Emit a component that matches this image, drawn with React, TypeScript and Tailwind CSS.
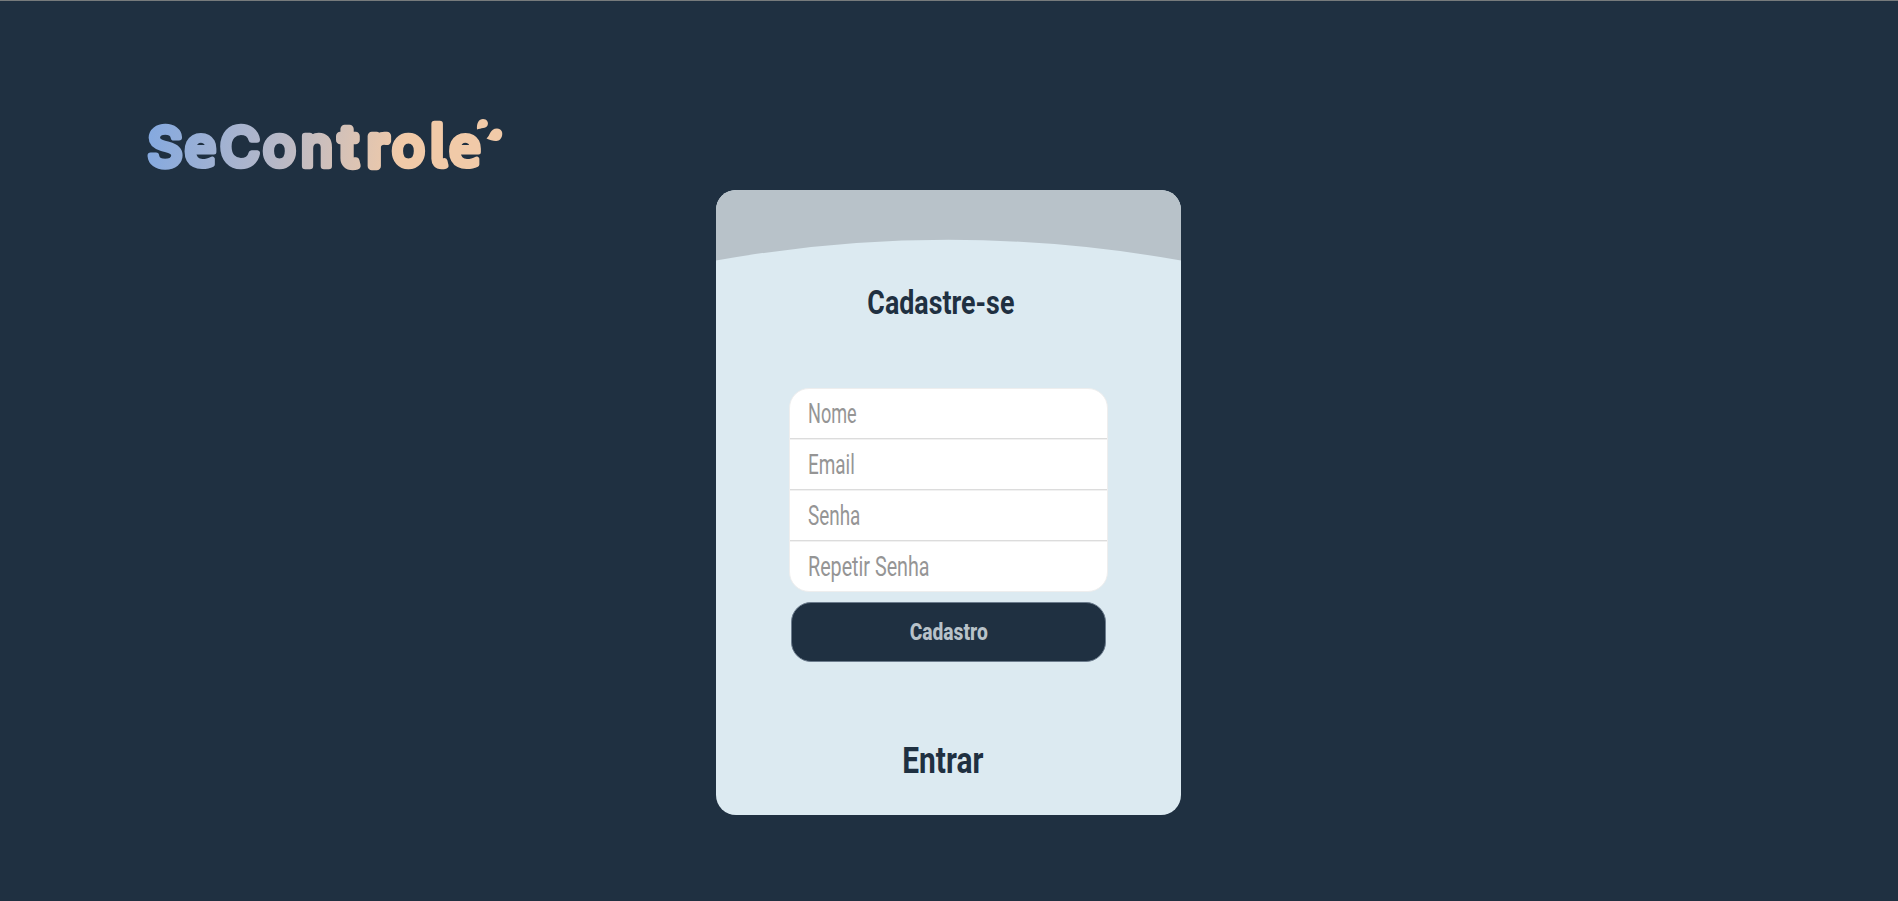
import React from "react";

const fields = [
  { label: "Nome", scale: "scale-x-[0.67]" },
  { label: "Email", scale: "scale-x-[0.70]" },
  { label: "Senha", scale: "scale-x-[0.70]" },
  { label: "Repetir Senha", scale: "scale-x-[0.73]" },
];

function Logo() {
  return (
    <svg width="380" height="80" viewBox="136 105 380 80" role="img" aria-label="SeControle">
      <defs>
        <linearGradient id="brand" gradientUnits="userSpaceOnUse" x1="148" y1="125" x2="400" y2="165">
          <stop offset="0" stopColor="#84a9e0" />
          <stop offset="0.5" stopColor="#b5b8c8" />
          <stop offset="1" stopColor="#f1caa8" />
        </linearGradient>
      </defs>
      <text
        y="166"
        x="165 200.500 240 279.500 317 348.500 378 408.500 438 465"
        textAnchor="middle"
        fontFamily="Inter, sans-serif"
        fontSize="54"
        fontWeight="400"
        fill="url(#brand)"
        stroke="url(#brand)"
        strokeWidth="6.500"
        strokeLinejoin="round"
        className="[font-feature-settings:'cv05']"
      >
        S
        <tspan fontFamily="'Open Sans', sans-serif" fontSize="56" fontWeight="600" strokeWidth="5">e</tspan>
        Con
        <tspan strokeWidth="8.500">tr</tspan>
        o
        <tspan fontSize="57">l</tspan>
        <tspan fontFamily="'Open Sans', sans-serif" fontSize="56" fontWeight="600" strokeWidth="5">e</tspan>
      </text>
      <g fill="#f1caa8">
        <path d="M477 129.500C476.500 123 479 119 483 119C487 119 489 122.500 487.500 125.500C486 128.500 481 128 477 129.500Z" />
        <path d="M486.500 138.500C490 136 490 128.500 497 128.500C501.500 128.500 503 132.500 502 136C500 143 493 141.500 486.500 138.500Z" />
      </g>
    </svg>
  );
}

export default function App() {
  return (
    <main className="flex h-[901px] w-full flex-col border-t border-[#777b7c] bg-[#1f3041] font-['Roboto',sans-serif]">
      <header className="h-[189px] pt-[104px] pl-[136px]">
        <Logo />
      </header>
      <section className="ml-[716px] flex h-[625px] w-[465px] flex-col items-center overflow-hidden rounded-[20px] bg-[#dceaf1]">
        <svg className="block shrink-0" width="465" height="71" viewBox="0 0 465 71">
          <path d="M0 0H465V70.500A1329 1329 0 0 0 0 70.500Z" fill="#b8c2c9" />
        </svg>
        <h1 className="mt-[22px] -ml-[15px] h-10 scale-x-[0.8] text-[33.5px] leading-10 font-bold whitespace-nowrap text-[#1f3041]">
          Cadastre-se
        </h1>
        <form className="mt-[65px] flex w-[319px] flex-col items-center">
          <div className="h-[204px] w-full overflow-hidden rounded-[20px] border border-[#eeeeee] bg-white">
            {fields.map((field) => (
              <label
                key={field.label}
                className="flex h-[51px] items-center border-b border-[#dcdcdc] pt-[3px] pl-[18px] shadow-[0_1px_0_#f1f1f1] first:h-[50px] first:pt-px"
              >
                <span className={`${field.scale} origin-left text-[27px] leading-none whitespace-nowrap text-[#959595]`}>
                  {field.label}
                </span>
              </label>
            ))}
          </div>
          <button type="button" className="mt-[10px] flex h-[60px] w-[315px] items-center justify-center rounded-[20px] border border-[#6c7c8d] bg-[#1f3041]">
            <span className="scale-x-[0.785] text-[24.500px] leading-none font-extrabold text-[#b8c2c9]">Cadastro</span>
          </button>
        </form>
        <a className="mt-[79px] -ml-[11px] scale-x-[0.83] text-[36px] leading-10 font-bold text-[#1f3041]">Entrar</a>
      </section>
    </main>
  );
}
